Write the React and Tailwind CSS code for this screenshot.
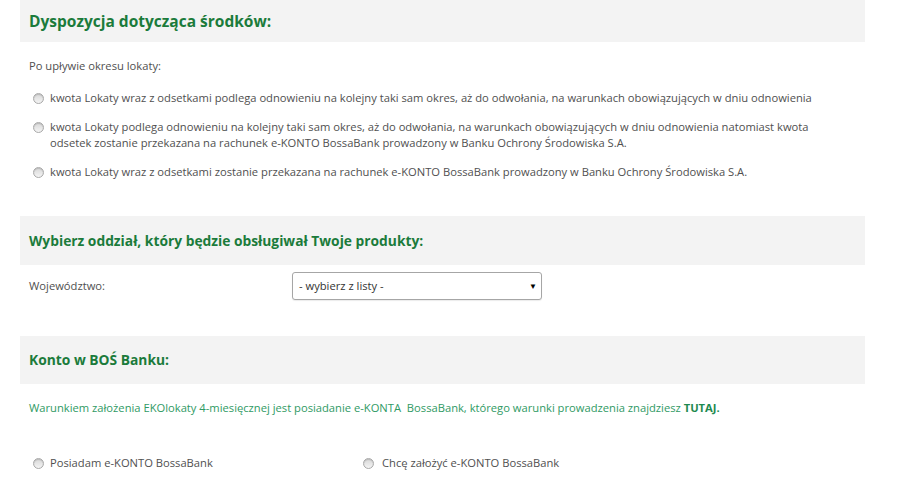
const options = [
  ['kwota Lokaty wraz z odsetkami podlega odnowieniu na kolejny taki sam okres, aż do odwołania, na warunkach obowiązujących w dniu odnowienia'],
  [
    'kwota Lokaty podlega odnowieniu na kolejny taki sam okres, aż do odwołania, na warunkach obowiązujących w dniu odnowienia natomiast kwota',
    'odsetek zostanie przekazana na rachunek e-KONTO BossaBank prowadzony w Banku Ochrony Środowiska S.A.',
  ],
  ['kwota Lokaty wraz z odsetkami zostanie przekazana na rachunek e-KONTO BossaBank prowadzony w Banku Ochrony Środowiska S.A.'],
]

const Radio = () => (
  <span className="mt-[3px] block h-[11px] w-[11px] shrink-0 rounded-full border border-[#a9a9a9] bg-gradient-to-b from-[#d8d8d8] to-[#f4f4f4] shadow-[inset_0_1px_1px_rgba(0,0,0,0.15)]" />
)

const SectionHeader = ({ title, height, size }) => (
  <div className={`flex items-center bg-[#f3f3f3] px-[9px] ${height}`}>
    <h2 className={`font-bold text-[#1b7b3b] ${size}`}>{title}</h2>
  </div>
)

export default function App() {
  return (
    <div className="min-h-[484px] bg-white pl-[20px] font-['Open_Sans',sans-serif] text-[11.2px] leading-[16px] text-[#505050]">
      <div className="w-[845px]">
        <SectionHeader title="Dyspozycja dotycząca środków:" height="h-[42px]" size="text-[15.5px]" />
        <p className="mt-[16px] px-[9px]">Po upływie okresu lokaty:</p>
        <div className="mt-[16px] flex flex-col gap-[13px] pl-[13px]">
          {options.map((lines, i) => (
            <label key={i} className="flex gap-[6px]">
              <Radio />
              <span>
                {lines.map((l) => (
                  <span key={l} className="block whitespace-nowrap">{l}</span>
                ))}
              </span>
            </label>
          ))}
        </div>

        <div className="mt-[36px]">
          <SectionHeader title="Wybierz oddział, który będzie obsługiwał Twoje produkty:" height="h-[49px]" size="text-[13.8px]" />
        </div>
        <div className="mt-[7px] flex items-center px-[9px]">
          <span className="w-[263px]">Województwo:</span>
          <div className="flex h-[28px] w-[250px] items-center justify-between rounded-[3px] border border-[#a6a6a6] bg-white pl-[6px] pr-[4px] shadow-[0_1px_1px_rgba(0,0,0,0.08)]">
            <span className="text-[#333]">- wybierz z listy -</span>
            <span className="text-[8px] text-black">▼</span>
          </div>
        </div>

        <div className="mt-[36px]">
          <SectionHeader title="Konto w BOŚ Banku:" height="h-[48px]" size="text-[13.8px]" />
        </div>
        <p className="mt-[16px] px-[9px] text-[#2f9a64]">
          Warunkiem założenia EKOlokaty 4-miesięcznej jest posiadanie e-KONTA&nbsp; BossaBank, którego warunki prowadzenia znajdziesz{' '}
          <span className="font-bold text-[#1e8a50]">TUTAJ.</span>
        </p>
        <div className="mt-[39px] flex pl-[13px]">
          <label className="flex w-[330px] gap-[6px]">
            <Radio />
            <span>Posiadam e-KONTO BossaBank</span>
          </label>
          <label className="flex gap-[8px]">
            <Radio />
            <span>Chcę założyć e-KONTO BossaBank</span>
          </label>
        </div>
      </div>
    </div>
  )
}
